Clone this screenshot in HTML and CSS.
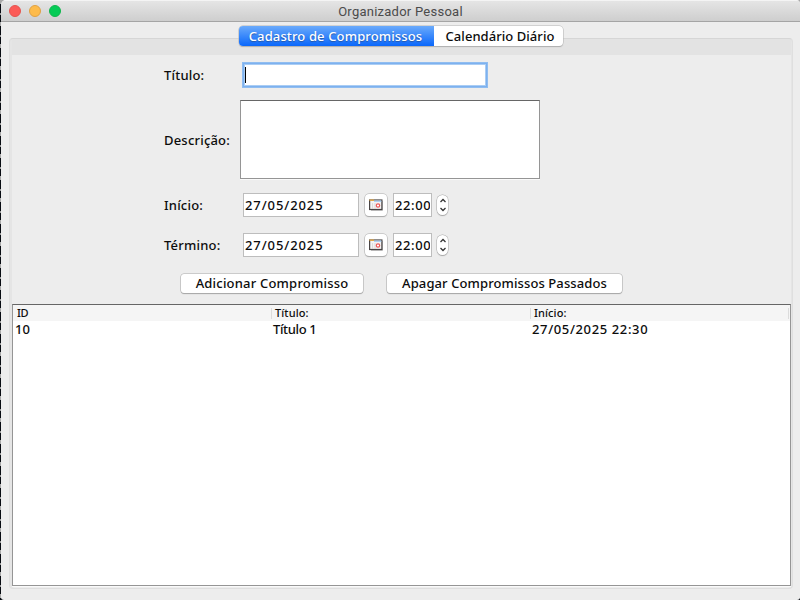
FILE: index.html
```html
<!DOCTYPE html>
<html lang="pt-BR">
<head>
<meta charset="utf-8">
<title>Organizador Pessoal</title>
<link rel="stylesheet" href="styles.css">
</head>
<body>
<svg class="defs" width="0" height="0" aria-hidden="true">
  <symbol id="calendar" viewBox="0 0 14 12">
    <path d="M2 11.500H13.500V2" fill="none" stroke="#c4c4c4"/>
    <rect x=".6" y="1" width="12.300" height="9.500" fill="#f4f4f4" stroke="#484444" stroke-width="1.2"/>
    <path d="M.5 1.200H5" stroke="#e5a945" stroke-width="1.500"/>
    <path d="M5 2.200H12.300" stroke="#a9cdf0" stroke-width="1.4"/>
    <path d="M3.500 4V10M6 4V10" stroke="#d6d6d6" stroke-width=".8"/>
    <circle cx="9" cy="6.500" r="1.700" fill="#fff" stroke="#ee5a5a" stroke-width="1.2"/>
  </symbol>
  <symbol id="arrows" viewBox="0 0 8 14">
    <path d="M1.500 4L4 1.500L6.500 4M1.500 10L4 12.500L6.500 10" fill="none" stroke="#333" stroke-width="1.3"/>
  </symbol>
</svg>
<div class="window">
  <header class="titlebar">
    <div class="lights"><i class="close"></i><i class="minimize"></i><i class="zoom"></i></div>
    <span class="title">Organizador Pessoal</span>
  </header>
  <nav class="tabs">
    <button class="tab active">Cadastro de Compromissos</button>
    <button class="tab">Calendário Diário</button>
  </nav>
  <main class="panel">
    <div class="form">
      <label>Título:</label>
      <div class="field"><span class="caret"></span></div>
      <label>Descrição:</label>
      <div class="area"></div>
      <label>Início:</label>
      <div class="when">
        <div class="date">27/05/2025</div>
        <button class="pick"><svg width="14" height="12"><use href="#calendar"/></svg></button>
        <div class="time"><span>22:00</span></div>
        <button class="spin"><svg width="8" height="14"><use href="#arrows"/></svg></button>
      </div>
      <label>Término:</label>
      <div class="when">
        <div class="date">27/05/2025</div>
        <button class="pick"><svg width="14" height="12"><use href="#calendar"/></svg></button>
        <div class="time"><span>22:00</span></div>
        <button class="spin"><svg width="8" height="14"><use href="#arrows"/></svg></button>
      </div>
    </div>
    <div class="actions">
      <button class="push add">Adicionar Compromisso</button>
      <button class="push purge">Apagar Compromissos Passados</button>
    </div>
    <div class="table">
      <div class="row head"><span class="id">ID</span><span>Título:</span><span>Início:</span></div>
      <div class="row"><span>10</span><span class="name">Título 1</span><span class="stamp">27/05/2025 22:30</span></div>
    </div>
  </main>
</div>
</body>
</html>
```
FILE: styles.css
```css
* { box-sizing: border-box; }
body {
  margin: 0;
  width: 800px;
  height: 600px;
  overflow: hidden;
  background: repeating-linear-gradient(#a8a8a8 0 4px, #080c12 4px 13px, #999 13px 15px, #080c12 15px 22px);
  font: 500 13px/16px "Noto Sans", "Open Sans", sans-serif;
  color: #0c0c0c;
}
.defs { display: block; }
button { font: inherit; color: inherit; border: 0; padding: 0; margin: 0; white-space: nowrap; }
.window {
  width: 799px;
  height: 600px;
  margin-left: 1px;
  background: #ededed;
  border-radius: 5px 4px 3px 3px;
  overflow: hidden;
  display: flex;
  flex-direction: column;
}
.titlebar {
  height: 22px;
  flex: none;
  display: grid;
  grid-template-columns: 1fr auto 1fr;
  align-items: center;
  background: linear-gradient(#e5e5e5, #cecece);
  border-top: 1px solid #f4f4f4;
  border-bottom: 1px solid #a5a5a5;
}
.lights { display: flex; gap: 8px; padding-left: 8px; }
.lights i { width: 12px; height: 12px; border-radius: 50%; border: 1px solid; }
.lights .close { background: #fc5b57; border-color: #e4544f; }
.lights .minimize { background: #fdbb4b; border-color: #dfa144; }
.lights .zoom { background: #05cb56; border-color: #10b54c; }
.title { font: 400 13px/18px Roboto, sans-serif; letter-spacing: .25px; color: #4b4b4b; padding-top: 1px; }
.tabs {
  display: flex;
  flex: none;
  width: 324px;
  height: 20px;
  margin: 4px 0 -8px 238px;
  border-radius: 4px;
  z-index: 1;
  background: #fff;
  box-shadow: 0 0 0 .5px #b5b5b5, 0 1px 1px #aaa;
}
.tab { width: 129px; background: none; line-height: 19px; padding: 1px 0 0 3px; letter-spacing: .05px; }
.tab.active {
  width: 195px;
  padding: 1px 2px 0 0;
  border-radius: 4px 0 0 4px;
  background: linear-gradient(#6aaafb, #0a67fb);
  color: #fff;
  letter-spacing: .13px;
  text-shadow: 0 1px 1px #2558a8;
}
.panel {
  flex: none;
  width: 784px;
  height: 551px;
  margin-left: 8px;
  padding: 16px 1px 0 2px;
  border: 1px solid #dadada;
  border-color: #d6d6d6 #dfdfdf #dfdfdf;
  border-radius: 4px;
  background: linear-gradient(#e3e3e3 16px, transparent 16px);
  box-shadow: inset 2px 0 #e5e5e5, inset -1px 0 #e5e5e5;
}
.form {
  display: grid;
  grid-template-columns: 76px 310px;
  grid-template-rows: 40px 90px 40px 40px;
  align-items: center;
  padding-left: 152px;
  letter-spacing: .2px;
}
.field {
  width: 244px;
  height: 24px;
  margin-left: 3px;
  background: #fff;
  border: 1px solid #7db1ef;
  box-shadow: 0 0 0 1px #90bdf0, inset 0 0 0 1px #aacdf4;
  padding: 3px 1px;
}
.caret { display: block; width: 1px; height: 16px; background: #000; }
.area {
  width: 300px;
  height: 79px;
  margin-bottom: 2px;
  background: #fff;
  border: 1px solid #959595;
  border-top-color: #666;
  box-shadow: 0 1px #fafafa;
}
.when { display: flex; align-items: center; height: 24px; }
.date, .time {
  height: 24px;
  background: #fff;
  border: 1px solid #bdbdbd;
  line-height: 23px;
  padding-left: 1px;
  letter-spacing: .9px;
}
.date { width: 116px; margin-left: 3px; }
.time { width: 39px; margin-left: 6px; padding-right: 1px; letter-spacing: .6px; }
.time span { display: block; overflow: hidden; height: 22px; }
.pick, .spin {
  display: grid;
  place-items: center;
  background: #fff;
  box-shadow: 0 0 0 .5px #aaa, 0 1px 1px #aaa;
}
.pick { width: 22px; height: 22px; border-radius: 4px; margin-left: 6px; }
.spin { width: 11px; height: 20px; border-radius: 6px; margin-left: 5px; }
.actions { display: flex; gap: 24px; padding: 9px 0 0 169px; }
.push {
  height: 19px;
  border-radius: 3px;
  background: #fff;
  box-shadow: 0 0 0 .5px #aaa, 0 1px 1px #a5a5a5;
  line-height: 19px;
}
.add { width: 182px; letter-spacing: .2px; }
.purge { width: 235px; letter-spacing: .1px; }
.table {
  width: 779px;
  height: 282px;
  margin-top: 11px;
  background: #fff;
  border: 1px solid #959595;
  border-top-color: #666;
  box-shadow: 0 1px #fafafa;
}
.row { display: grid; grid-template-columns: 258px 259px 1fr; line-height: 17px; padding: 0 1px 0 2px; }
.name { letter-spacing: -.35px; }
.stamp { letter-spacing: .63px; }
.head { height: 16px; background: #f5f5f5; font-size: 11px; }
.head span { position: relative; left: -2px; height: 11px; margin-top: 3px; line-height: 9px; border-left: 1px solid #dcdcdc; padding-left: 3px; letter-spacing: .1px; }
.head .id { left: 0; border-left: 0; padding-left: 2px; letter-spacing: -.3px; }
.head span:last-child { margin-right: -2px; border-right: 1px solid #dcdcdc; }
```
